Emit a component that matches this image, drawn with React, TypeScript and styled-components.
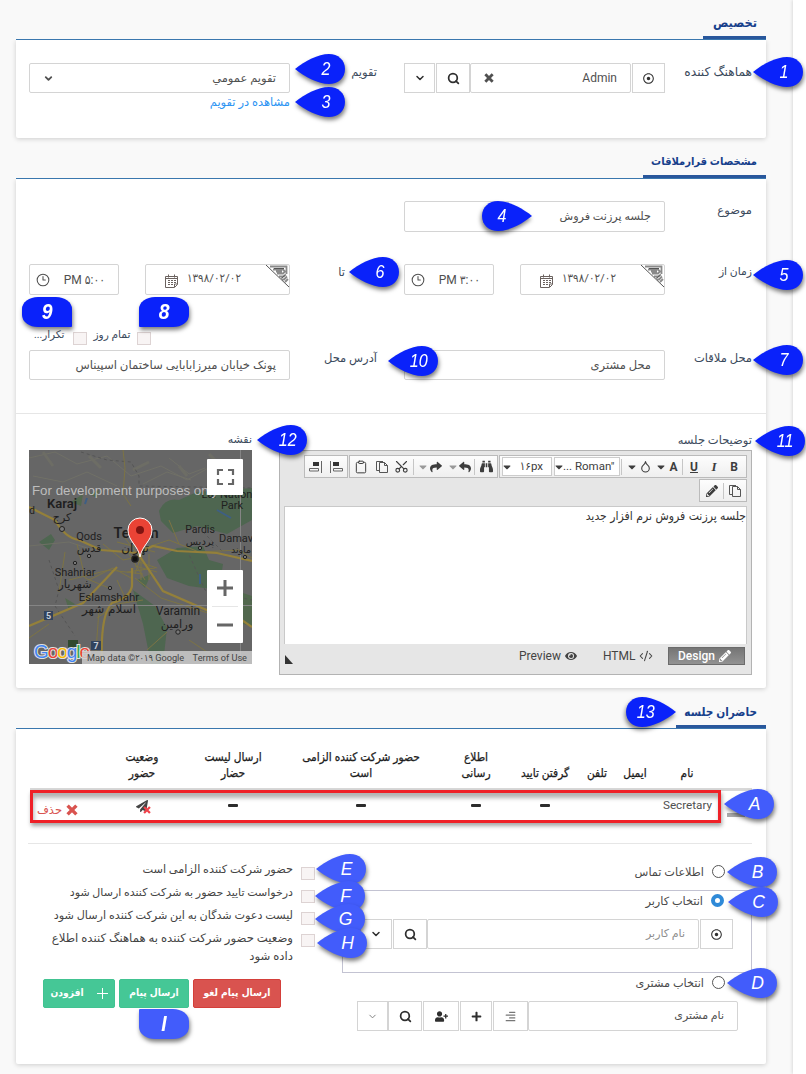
import React from "react";
import styled, { createGlobalStyle, css } from "styled-components";
import {
  FaRegDotCircle, FaPlus, FaUserPlus, FaAlignRight, FaPaperPlane,
  FaShare, FaReply, FaBinoculars, FaEye, FaPencilAlt, FaCaretDown,
} from "react-icons/fa";
import { ChevronDown, Clipboard, Copy, Scissors, Clock3, Droplet, Search, CodeXml } from "lucide-react";

const Global = createGlobalStyle`
  * { box-sizing: border-box; }
  body { margin: 0; background: #f9f9f9; overflow: hidden; }
  svg { flex: none; display: block; }
`;

const wide = `Roboto, "DejaVu Sans", sans-serif`;
const narrow = `Roboto, "DejaVu Sans Condensed", "DejaVu Sans", sans-serif`;

const Page = styled.div`
  position: relative;
  width: 806px;
  height: 1074px;
  display: flex;
  overflow: hidden;
  background: #f9f9f9;
  color: #444;
  font: 12px/20px ${wide};
`;

const Main = styled.main`
  width: 766px;
  padding-left: 16px;
  margin-right: 27px;
`;

const SideStrip = styled.aside`
  flex: 1;
  background: #fff;
  box-shadow: -1px 0 3px rgba(0, 0, 0, 0.12);
`;

const SectionHead = styled.header<{ $h: number }>`
  height: ${(p) => p.$h}px;
  display: flex;
  justify-content: flex-end;
  align-items: flex-end;
  border-bottom: 1px solid #3a77ae;
`;

const SectionTab = styled.h2<{ $w: number; $size?: number }>`
  width: ${(p) => p.$w}px;
  height: 26px;
  margin: 0;
  padding-right: 9px;
  border-bottom: 3px solid #29579c;
  color: #17408b;
  font: 700 ${(p) => p.$size ?? 12}px/20px ${narrow};
  text-align: right;
  white-space: nowrap;
  direction: rtl;
`;

const Card = styled.section<{ $h: number; $top: number }>`
  height: ${(p) => p.$h}px;
  padding: ${(p) => p.$top}px 0 0 13px;
  background: #fff;
  border-radius: 0 0 2px 2px;
  box-shadow: 0 1px 5px rgba(0, 0, 0, 0.18);
  clip-path: inset(0 -8px -8px -8px);
`;

const FormRow = styled.div<{ $mt?: number }>`
  display: grid;
  grid-template-columns: 261px 87px 27px 261px 87px;
  align-items: start;
  margin-top: ${(p) => p.$mt ?? 0}px;
`;

const Cell = styled.div<{ $col: number }>`
  grid-column: ${(p) => p.$col};
  grid-row: 1;
  display: flex;
  justify-content: space-between;
`;

const Label = styled.div<{ $col?: number; $mt?: number; $size?: number; $pr?: number }>`
  ${(p) => p.$col && css`grid-column: ${p.$col}; grid-row: 1;`}
  margin-top: ${(p) => p.$mt ?? 0}px;
  padding-right: ${(p) => p.$pr ?? 0}px;
  direction: rtl;
  color: #3b4a5c;
  font-size: ${(p) => p.$size ?? 11.5}px;
  line-height: 20px;
  white-space: nowrap;
`;

const fieldFrame = css`
  border: 1px solid #d4d4d4;
  border-radius: 2px;
  background: #fff;
`;

const Field = styled.div<{ $w: number; $h?: number; $size?: number; $muted?: boolean }>`
  ${fieldFrame}
  width: ${(p) => p.$w}px;
  height: ${(p) => p.$h ?? 31}px;
  padding: 0 13px;
  display: flex;
  flex-direction: row-reverse;
  justify-content: space-between;
  align-items: center;
  color: ${(p) => (p.$muted ? "#8d8d8d" : "#505050")};
  font-size: ${(p) => p.$size ?? 11.5}px;
  white-space: nowrap;
`;

const Rtl = styled.span<{ $size?: number }>`
  direction: rtl;
  ${(p) => p.$size && css`font-size: ${p.$size}px;`}
`;

const AddOn = styled.div<{ $w: number; $ml?: number; $light?: boolean }>`
  ${fieldFrame}
  border-radius: 0;
  width: ${(p) => p.$w}px;
  height: 30px;
  margin-left: ${(p) => p.$ml ?? 0}px;
  display: flex;
  align-items: center;
  justify-content: center;
  color: ${(p) => (p.$light ? "#777" : "#2e2e2e")};
`;

const Group = styled.div<{ $mt?: number; $ml?: number }>`
  display: flex;
  align-items: flex-start;
  margin: ${(p) => p.$mt ?? 0}px 0 0 ${(p) => p.$ml ?? 0}px;
`;

const Link = styled.a`
  display: block;
  width: 261px;
  margin-top: -1px;
  direction: rtl;
  color: #2d94f3;
  font-size: 11.5px;
  line-height: 20px;
`;

const DateBox = styled.div`
  ${fieldFrame}
  width: 145px;
  height: 31px;
  padding: 0 0 0 19px;
  display: flex;
  overflow: hidden;
  color: #505050;
`;

const DateText = styled.span`
  width: 56px;
  margin: 3px 0 0 9px;
  font-size: 11.5px;
  font-family: ${narrow};
  white-space: nowrap;
`;

const Corner = styled.svg`
  margin-left: auto;
`;

const CalIcon = styled.svg`
  margin-top: 9px;
`;

const TimeBox = styled.div`
  ${fieldFrame}
  width: 90px;
  height: 31px;
  padding: 0 13px 0 6px;
  display: flex;
  align-items: center;
  justify-content: space-between;
  color: #505050;
  font-size: 12px;
  font-family: ${narrow};
`;

const CheckRow = styled.div`
  display: flex;
  align-items: flex-start;
  height: 22px;
  margin-top: 30px;
  padding-left: 5px;
`;

const Check = styled.i<{ $m?: string }>`
  flex: none;
  width: 14px;
  height: 13px;
  margin: ${(p) => p.$m ?? "0"};
  border: 1px solid #ddd3d3;
  background: #f8f4f4;
`;

const Rule = styled.hr<{ $m: string }>`
  height: 1px;
  margin: ${(p) => p.$m};
  border: 0;
  background: #e6e6e6;
`;

const LowerRow = styled.div`
  display: flex;
  justify-content: space-between;
  width: 723px;
  margin-top: 16px;
`;

const MapFrame = styled.div`
  position: relative;
  width: 223px;
  height: 214px;
  overflow: hidden;
  background: #666;
`;

const MapButton = styled.div<{ $y: number; $h: number }>`
  position: absolute;
  left: 178px;
  top: ${(p) => p.$y}px;
  width: 36px;
  height: ${(p) => p.$h}px;
  border-radius: 1px;
  background: #fff;
`;

const MapCredit = styled.div`
  position: absolute;
  right: 0;
  bottom: 0;
  width: 170px;
  height: 13px;
  padding: 0 5px;
  display: flex;
  justify-content: space-between;
  background: rgba(205, 205, 205, 0.85);
  color: #444;
  font: 9.2px/13px ${narrow};
  white-space: nowrap;
`;

const Editor = styled.div`
  width: 473px;
  height: 225px;
  padding: 4px;
  border: 1px solid #b3b3b3;
  background: #e6e6e6;
`;

const ToolLine = styled.div`
  display: flex;
  justify-content: flex-end;
  gap: 1px;
  margin-bottom: 1px;
`;

const ToolGroup = styled.div<{ $w: number }>`
  width: ${(p) => p.$w}px;
  height: 23px;
  display: flex;
  align-items: center;
  border: 1px solid #bbb;
  background: linear-gradient(#fdfdfd, #efefef);
  color: #3d3d3d;
`;

const Slot = styled.span<{ $w: number; $ml?: number }>`
  width: ${(p) => p.$w}px;
  margin-left: ${(p) => p.$ml ?? 0}px;
  display: flex;
  justify-content: center;
`;

const Sep = styled.i<{ $ml?: number }>`
  width: 1px;
  height: 16px;
  margin-left: ${(p) => p.$ml ?? 0}px;
  background: #c6c6c6;
`;

const MiniSelect = styled.div<{ $w: number }>`
  width: ${(p) => p.$w}px;
  height: 19px;
  margin-left: 2px;
  display: flex;
  align-items: center;
  justify-content: space-between;
  padding: 0 8px 2px 0;
  border: 1px solid #ccc;
  background: #fff;
  font: 11.5px/16px ${narrow};
  white-space: nowrap;
  svg { width: 8px; margin-top: 2px; }
`;

const Glyph = styled.b<{ $look?: "italic" | "underline" }>`
  font-size: 12px;
  ${(p) => p.$look === "italic" && css`font: italic 700 13px/20px "Liberation Serif", serif;`}
  ${(p) => p.$look === "underline" && css`text-decoration: underline;`}
`;

const EditArea = styled.div`
  height: 138px;
  margin-top: 4px;
  border: 1px solid #c9c9c9;
  border-bottom: 0;
  background: #fff;
  direction: rtl;
  font: 12.1px/19px "DejaVu Sans Condensed", sans-serif;
  color: #333;
`;

const EditorFoot = styled.div`
  display: flex;
  align-items: center;
  height: 24px;
  font-size: 12px;
  padding-right: 2px;
`;

const Mode = styled.span<{ $ml: number }>`
  display: flex;
  align-items: center;
  gap: 4px;
  margin-left: ${(p) => p.$ml}px;
  color: #444;
`;

const ModeActive = styled.span`
  display: flex;
  align-items: center;
  gap: 4px;
  width: 77px;
  height: 18px;
  margin-left: auto;
  padding-left: 9px;
  border: 1px solid #6b6b6b;
  background: linear-gradient(#757575, #929292);
  color: #fff;
  font-weight: 500;
`;

const TableHead = styled.div`
  display: grid;
  grid-template-columns: 70px 84px 98px 158px 72px 66px 38px 38px 66px;
  width: 722px;
  height: 59px;
  align-items: end;
  padding-bottom: 7px;
  margin-left: 1px;
  border-bottom: 3px solid #d8d8d8;
  text-align: center;
  color: #1c1c1c;
  font: 500 11.8px/16px ${narrow};
  -webkit-text-stroke: 0.25px #1c1c1c;
`;

const HeadCell = styled.div`
  direction: rtl;
  white-space: nowrap;
`;

const TableRow = styled.div`
  display: grid;
  grid-template-columns: 67px 84px 98px 158px 72px 66px 38px 38px 61px;
  width: 691px;
  height: 33px;
  margin: -1px 0 0 1px;
  border: 3px solid #ef2027;
  box-shadow: 1px 3px 4px rgba(0, 0, 0, 0.35), inset 1px 5px 4px rgba(0, 0, 0, 0.3);
  justify-items: center;
  padding-top: 3px;
  position: relative;
`;

const Dash = styled.i`
  width: 10px;
  height: 3px;
  margin-top: 8px;
  border-radius: 1px;
  background: #2c2c2c;
`;

const Remove = styled.span`
  display: flex;
  align-items: center;
  gap: 4px;
  margin-top: 4px;
  margin-right: 18px;
  color: #d9534f;
  font-size: 11.5px;
`;

const PersonName = styled.span`
  margin: -1px -6px 0 0;
  color: #505050;
  font-size: 11.7px;
`;

const SendState = styled.span`
  position: relative;
  margin-top: 4px;
  height: 16px;
  svg + svg { position: absolute; left: 7px; top: 6px; color: #f0424a; }
`;

const Invite = styled.div`
  display: flex;
  justify-content: space-between;
  width: 723px;
`;

const Options = styled.div`
  width: 286px;
  padding-top: 17px;
`;

const OptionRow = styled.div<{ $h: number }>`
  display: flex;
  flex-direction: row-reverse;
  align-items: flex-start;
  gap: 8px;
  height: ${(p) => p.$h}px;
  color: #444;
  font-size: 11.3px;
  line-height: 18px;
  white-space: nowrap;
`;

const Actions = styled.div`
  display: flex;
  gap: 4px;
  margin: -1px 0 0 14px;
`;

const Button = styled.button<{ $w: number; $danger?: boolean }>`
  width: ${(p) => p.$w}px;
  height: 29px;
  padding: 0 0 1px;
  display: flex;
  align-items: center;
  justify-content: center;
  gap: 13px;
  border: 1px solid ${(p) => (p.$danger ? "#d43f3a" : "#41c391")};
  border-radius: 2px;
  background: ${(p) => (p.$danger ? "#d9534f" : "#45c796")};
  color: #fff;
  font: 700 10.2px/18px "DejaVu Sans Condensed", sans-serif;
`;

const Pick = styled.div`
  width: 410px;
`;

const RadioLine = styled.div<{ $pt: number; $pr: number; $h: number }>`
  display: flex;
  justify-content: flex-end;
  gap: 8px;
  height: ${(p) => p.$h}px;
  padding: ${(p) => p.$pt}px ${(p) => p.$pr}px 0 0;
  color: #4a4a4a;
  font-size: 11.3px;
  line-height: 18px;
`;

const Radio = styled.i<{ $on?: boolean }>`
  width: 13px;
  height: 13px;
  margin-top: 1px;
  border-radius: 50%;
  background: #fff;
  border: ${(p) => (p.$on ? "4px solid #2f8ad8" : "1px solid #555")};
`;

const UserBox = styled.div`
  height: 83px;
  border: 1px solid #c3c3d2;
`;

const ScrollNub = styled.i`
  position: absolute;
  left: 694px;
  top: 20px;
  width: 18px;
  height: 4px;
  background: #aaa;
`;

const Callouts = styled.div`
  position: absolute;
  inset: 0;
  pointer-events: none;
`;

const Drop = styled.div<{ $x: number; $y: number; $flip?: boolean; $soft?: boolean }>`
  position: absolute;
  left: ${(p) => p.$x}px;
  top: ${(p) => p.$y - 15}px;
  width: 50px;
  height: 30px;
  padding-${(p) => (p.$flip ? "right" : "left")}: 11px;
  color: #fff;
  font: italic 17.5px/30px "Liberation Sans", sans-serif;
  text-align: center;
  > svg {
    position: absolute;
    inset: 0;
    overflow: visible;
    color: ${(p) => (p.$soft ? "#425cfb" : "#0a22fa")};
    transform: ${(p) => (p.$flip ? "scaleX(-1)" : "none")};
    filter: drop-shadow(1px 3px 2px rgba(0, 0, 0, 0.5));
  }
  > span {
    position: relative;
    display: inline-block;
    transform: scaleX(${(p) => (p.$soft ? 1 : 0.92)});
  }
`;

const Tag = styled.div<{ $x: number; $y: number; $radius: string; $soft?: boolean }>`
  position: absolute;
  left: ${(p) => p.$x}px;
  top: ${(p) => p.$y}px;
  width: 50px;
  height: 30px;
  border-radius: ${(p) => p.$radius};
  background: ${(p) => (p.$soft ? "#425cfb" : "#0a22fa")};
  box-shadow: 1px 3px 4px rgba(0, 0, 0, 0.5);
  color: #fff;
  font: italic 700 22px/30px "Liberation Sans", sans-serif;
  text-align: center;
  > span { display: inline-block; transform: scaleX(0.88); }
`;

type Mark = { t: string; x: number; y: number; flip?: boolean; soft?: boolean };
const marks: Mark[] = [
  { t: "1", x: 753, y: 72 }, { t: "2", x: 295, y: 69 }, { t: "3", x: 295, y: 102 },
  { t: "4", x: 482, y: 216, flip: true }, { t: "5", x: 753, y: 275 }, { t: "6", x: 349, y: 272 },
  { t: "7", x: 753, y: 360 }, { t: "10", x: 388, y: 361 }, { t: "11", x: 755, y: 441 },
  { t: "12", x: 257, y: 440 }, { t: "13", x: 626, y: 712, flip: true },
  { t: "A", x: 724, y: 804, soft: true }, { t: "B", x: 727, y: 872, soft: true },
  { t: "C", x: 728, y: 902, soft: true }, { t: "D", x: 727, y: 983, soft: true },
  { t: "E", x: 316, y: 869, soft: true }, { t: "F", x: 315, y: 896, soft: true },
  { t: "G", x: 315, y: 919, soft: true }, { t: "H", x: 317, y: 943, soft: true },
];

const Cross = ({ size }: { size: number }) => (
  <svg width={size} height={size} viewBox="0 0 12 12" stroke="currentColor" strokeWidth="3.4">
    <path d="M1.600 1.600L10.400 10.400M10.400 1.600L1.600 10.400" />
  </svg>
);
const Down = ({ size = 12, weight = 3 }: { size?: number; weight?: number }) => (
  <ChevronDown size={size} strokeWidth={weight} />
);
const Find = () => <Search size={13} strokeWidth={3.2} />;

const DateField = () => (
  <DateBox>
    <CalIcon width="13" height="14" viewBox="0 0 13 14" fill="none" stroke="#6b625f">
      <path d="M.5 2.5h12v8l-3 3h-9zM.5 4.5h12M3.5.5v3M9.5.5v3M9.5 13v-3h3" />
      <path d="M3 6.5h2M6 6.5h2M9 6.5h2M3 8.5h2M6 8.5h2M9 8.5h2M3 10.5h2M6 10.5h2" />
    </CalIcon>
    <DateText>۱۳۹۸/۰۲/۰۲</DateText>
    <Corner width="23" height="23" viewBox="0 0 23 23" fill="none" stroke="#8a8a8a">
      <path d="M4 1.500H20.500V9M7 4.500h10l2 2-2 2h-6M10 6.500h6M13 11.500h4l3-2M16 14.500h2l3-3M19 17l3-3" strokeWidth="1.800" />
      <path d="M0 0L23 22M8 3.500h10M15 13.500l4-3" stroke="#555" />
    </Corner>
  </DateBox>
);

const TimeField = ({ text }: { text: string }) => (
  <TimeBox><Clock3 size={14} strokeWidth={1.8} /><span>{text}</span></TimeBox>
);

const RoadMap = () => (
  <svg width="223" height="214" viewBox="0 0 223 214" fill="none">
    <path d="M130 61q6-14 20-11l18-8 55-4v32l-25 14-30-8-24 7-12-12zM128 110l20-12 26-2 6 14 14 4-4 26-30-4-22-8zM104 140l22 16 12 22-4 36h-12l-8-40zM10 92l12-8 4 6-6 10z" fill="#4e6650" />
    <path d="M42 52l12-8-2 12zM36 148l10 6-6 6zM108 130l14-6-6 14zM60 44l10-4-2 8zM205 140l18 6v30l-18-4z" fill="#52684e" />
    <path d="M0 8l26-6 22 12 30-8 24 20 30-10 26 14 32-18M4 26l30 6 24-10 30 14M114 34l24-12 24 8M0 96l40-4 30 10M140 8l20 16 16-6" stroke="#707066" />
    <path d="M14 2l10 14M60 6l12 12M104 20l16-8M180 4l10 10M150 16l8 10" stroke="#6d6d65" strokeWidth="3" />
    <path d="M52 2l26 8 24 2 8 14v10l113 2M20 110l10 30-4 16 20 30M158 100l18 40 47 10M174 82l20 20" stroke="#555" strokeDasharray="3 3" />
    <g stroke="#7d7444">
      <path d="M94 0l2 18-2 26 8 12M110 100l30-10 30 12 40-2 13 8M48 94l8 34 24 10M60 130l24-12 18 10M74 94l20 16 20-4M88 130l10 22M106 128l26 20 50 16M68 168l20-14 26-4M140 70l10 24M96 88l30 40M88 92l38 10M100 104l16 26M118 88l-12 36M40 130l40-10 34 4M0 188l20-14M36 102l-6 40M160 190l30 20M70 160l-4 54M118 200l20-18" />
      <path d="M104 110l24 8M106 116l22 6M112 104v26M120 104v26M98 122l28-4" />
    </g>
    <g stroke="#94803a" strokeWidth="2.2">
      <path d="M0 57l26 13q10 18 24 20l22 10 38 3 14-7 24 5 40 2 35 8M0 176l54-23 34-36M103 118v18q-2 12-20 17-12 12-10 61M110 105l24 36 46 20 14-4 29 20" />
    </g>
    <path d="M188 60l14 8M58 48l-2 6M171 124v10" stroke="#3e5f84" strokeWidth="2" />
    <path d="M211.500 0V214M0 155.500H223" stroke="#858585" />
    <g fontFamily="Roboto, sans-serif" fill="#1f1f1f" fontSize="11" textAnchor="middle">
      <text x="33" y="58" fontSize="13" fontWeight="600">Karaj</text>
      <text x="3" y="64" fontSize="10">d</text>
      <text x="60" y="90">Qods</text>
      <text x="107" y="88" fontSize="14.500" fontWeight="600">Tehran</text>
      <text x="171" y="83" fontSize="10.500">Pardis</text>
      <text x="207" y="92">Damav</text>
      <text x="198" y="48">Lar Nation</text>
      <text x="203" y="59">Park</text>
      <text x="46" y="126">Shahriar</text>
      <text x="80" y="151" fontSize="11.500">Eslamshahr</text>
      <text x="149" y="165" fontSize="12">Varamin</text>
    </g>
    <g fontFamily="DejaVu Sans, sans-serif" fill="#1f1f1f" fontSize="11" textAnchor="middle">
      <text x="33" y="71">کرج</text>
      <text x="60" y="102" fontSize="11">قدس</text>
      <text x="106" y="102" fontSize="12">تهران</text>
      <text x="171" y="95" fontSize="10">پردیس</text>
      <text x="212" y="103" fontSize="9.500">ماوند</text>
      <text x="46" y="138" fontSize="11.500">شهریار</text>
      <text x="80" y="163" fontSize="12">اسلام شهر</text>
      <text x="148" y="178" fontSize="11.500">ورامین</text>
    </g>
    <g stroke="#222" fill="#777">
      <circle cx="33" cy="79" r="2.500" /><circle cx="60" cy="106" r="1.700" /><circle cx="46" cy="113" r="1.700" />
      <circle cx="81" cy="138" r="1.700" /><circle cx="171" cy="98" r="1.700" /><circle cx="216" cy="107" r="1.700" />
      <circle cx="149" cy="182" r="2.200" /><circle cx="106" cy="109" r="3" fill="#111" strokeWidth="1.500" />
    </g>
    <text x="3" y="45" fill="#bdbdbd" fontFamily="Liberation Sans, sans-serif" fontSize="13.3">For development purposes only</text>
    <g fill="#fff" fontFamily="Roboto, sans-serif" fontSize="9" fontWeight="700">
      <path d="M15 161h9v9h-9zM62 191h10v9h-10z" fill="#31435d" /><path d="M39 190h10v10h-10z" fill="#30492f" />
      <text x="17" y="169" fill="#c8ced8">5</text><text x="64.500" y="199" fill="#c8ced8">7</text>
    </g>
    <path d="M111 107C109 95 99 91 99 80a12 12 0 0 1 24 0c0 11-10 15-12 27z" fill="#ea4335" stroke="#fff" />
    <circle cx="111" cy="80" r="4" fill="#811411" />
    <text x="5" y="208" fontFamily="Liberation Sans, sans-serif" fontSize="19" strokeWidth="2" stroke="#e0e0e0" paintOrder="stroke" textLength="56">
      <tspan fill="#4285f4">G</tspan><tspan fill="#ea4335">o</tspan><tspan fill="#fbbc05">o</tspan><tspan fill="#4285f4">g</tspan><tspan fill="#34a853">l</tspan><tspan fill="#ea4335">e</tspan>
    </text>
  </svg>
);

export default function App() {
  return (
    <>
      <Global />
      <Page>
        <Main>
          <SectionHead $h={40}><SectionTab $w={63} $size={12.7}>تخصیص</SectionTab></SectionHead>
          <Card $h={98} $top={23}>
            <FormRow>
              <Cell $col={1}>
                <Field $w={261} $h={30}><Rtl>تقويم عمومي</Rtl><Down size={11} weight={4} /></Field>
              </Cell>
              <Label $col={2} $mt={-1}>تقویم</Label>
              <Cell $col={4}>
                <Group>
                  <AddOn $w={31}><Down /></AddOn>
                  <AddOn $w={34} $ml={1}><Find /></AddOn>
                  <Field $w={161} $h={30} $size={12}><span>Admin</span><Cross size={10} /></Field>
                  <AddOn $w={33} $ml={1}><FaRegDotCircle size={11} /></AddOn>
                </Group>
              </Cell>
              <Label $col={5} $mt={-1} $size={12.3}>هماهنگ کننده</Label>
            </FormRow>
            <Link>مشاهده در تقویم</Link>
          </Card>

          <SectionHead $h={41}><SectionTab $w={123} $size={11.1}>مشخصات قرارملاقات</SectionTab></SectionHead>
          <Card $h={509} $top={22}>
            <FormRow>
              <Cell $col={4}><Field $w={261}><Rtl $size={11.2}>جلسه پرزنت فروش</Rtl></Field></Cell>
              <Label $col={5} $mt={-1}>موضوع</Label>
            </FormRow>
            <FormRow $mt={32}>
              <Cell $col={1}><TimeField text="PM ۵:۰۰" /><DateField /></Cell>
              <Label $col={2} $mt={-2} $pr={32}>تا</Label>
              <Cell $col={4}><TimeField text="PM ۳:۰۰" /><DateField /></Cell>
              <Label $col={5} $mt={-2} $size={10.8}>زمان از</Label>
            </FormRow>
            <CheckRow>
              <Label $size={10.4}>تکرار...</Label><Check $m="7px 7px 0 8px" />
              <Label $size={10.6}>تمام روز</Label><Check $m="7px 0 0 7px" />
            </CheckRow>
            <FormRow $mt={3}>
              <Cell $col={1}><Field $w={261} $h={30}><Rtl $size={11.7}>پونک خیابان میرزابابایی ساختمان اسپیناس</Rtl></Field></Cell>
              <Label $col={2} $mt={-2}>آدرس محل</Label>
              <Cell $col={4}><Field $w={261} $h={30}><Rtl>محل مشتری</Rtl></Field></Cell>
              <Label $col={5} $mt={-2}>محل ملاقات</Label>
            </FormRow>
            <Rule $m="33px 0 0 -13px" />
            <LowerRow>
              <div>
                <Label $size={11}>نقشه</Label>
                <MapFrame>
                  <RoadMap />
                  <MapButton $y={9} $h={36}>
                    <svg width="36" height="36" viewBox="0 0 36 36" fill="none" stroke="#666" strokeWidth="2.2">
                      <path d="M11 16v-5h5M21 11h5v5M26 20v5h-5M16 25h-5v-5" />
                    </svg>
                  </MapButton>
                  <MapButton $y={120} $h={73}>
                    <svg width="36" height="73" viewBox="0 0 36 73" fill="none" stroke="#666" strokeWidth="3">
                      <path d="M10 18h16M18 10v16M10 55h16" /><path d="M5 36.500h26" stroke="#e6e6e6" strokeWidth="1" />
                    </svg>
                  </MapButton>
                  <MapCredit><span>Map data ©۲۰۱۹ Google</span><span>Terms of Use</span></MapCredit>
                </MapFrame>
              </div>
              <div>
                <Label>توضیحات جلسه</Label>
                <Editor>
                  <ToolLine>
                    <ToolGroup $w={44}>
                      <Slot $w={22}><svg width="14" height="14" viewBox="0 0 14 14"><path d="M4 2h6v4H4z" fill="#333" /><path d="M.5 8.500h9v2.500h-9zM12.500 1v12" fill="none" stroke="#666" /></svg></Slot>
                      <Slot $w={18}><svg width="14" height="14" viewBox="0 0 14 14"><path d="M4 2h6v4H4z" fill="#333" /><path d="M4.500 8.500h9v2.500h-9zM1.500 1v12" fill="none" stroke="#666" /></svg></Slot>
                    </ToolGroup>
                    <ToolGroup $w={149}>
                      <Slot $w={22}><Clipboard size={14} strokeWidth={1.7} /></Slot>
                      <Slot $w={19}>
                        <svg width="14" height="14" viewBox="0 0 14 14" fill="none" stroke="#555"><path d="M4.500 2.500h5l3 3v7h-8zM9.500 2.500v3h3M4 10.500H1.500v-9H8" /></svg>
                      </Slot>
                      <Slot $w={21}><Scissors size={15} strokeWidth={1.8} transform="rotate(-90)" /></Slot>
                      <Sep $ml={1} />
                      <Slot $w={10} $ml={4}><FaCaretDown size={12} color="#999" /></Slot>
                      <Slot $w={14} $ml={1}><FaShare size={12} /></Slot>
                      <Slot $w={10} $ml={5}><FaCaretDown size={12} color="#999" /></Slot>
                      <Slot $w={14}><FaReply size={12} /></Slot>
                      <Sep $ml={2} />
                      <Slot $w={22}><FaBinoculars size={13} /></Slot>
                    </ToolGroup>
                    <ToolGroup $w={248}>
                      <MiniSelect $w={50}><FaCaretDown size={12} /><span>۱۶px</span></MiniSelect>
                      <MiniSelect $w={66}><FaCaretDown size={12} /><span>... Roman"</span></MiniSelect>
                      <Sep $ml={1} />
                      <Slot $w={12} $ml={4}><FaCaretDown size={12} /></Slot>
                      <Slot $w={14}><Droplet size={13} strokeWidth={2} /></Slot>
                      <Slot $w={10} $ml={4}><FaCaretDown size={12} /></Slot>
                      <Slot $w={13} $ml={1}><Glyph>A</Glyph></Slot>
                      <Sep $ml={2} />
                      <Slot $w={20} $ml={1}><Glyph $look="underline">U</Glyph></Slot>
                      <Slot $w={20}><Glyph $look="italic">I</Glyph></Slot>
                      <Slot $w={20}><Glyph>B</Glyph></Slot>
                    </ToolGroup>
                  </ToolLine>
                  <ToolLine>
                    <ToolGroup $w={48}>
                      <Slot $w={23}><FaPencilAlt size={12} /></Slot><Sep />
                      <Slot $w={22}>
                        <svg width="14" height="14" viewBox="0 0 14 14" fill="none" stroke="#555"><path d="M4.500 2.500h5l3 3v7h-8zM9.500 2.500v3h3M4 10.500H1.500v-9H8" /></svg>
                      </Slot>
                    </ToolGroup>
                  </ToolLine>
                  <EditArea>جلسه پرزنت فروش نرم افزار جدید</EditArea>
                  <EditorFoot>
                    <svg width="10" height="18" viewBox="0 0 10 18"><path d="M1 8v9h8z" fill="#333" /></svg>
                    <Mode $ml={225}>Preview <FaEye size={12} /></Mode>
                    <Mode $ml={26}>HTML <CodeXml size={14} strokeWidth={1.8} /></Mode>
                    <ModeActive>Design <FaPencilAlt size={12} /></ModeActive>
                  </EditorFoot>
                </Editor>
              </div>
            </LowerRow>
          </Card>

          <SectionHead $h={41}><SectionTab $w={90} $size={11.7}>حاضران جلسه</SectionTab></SectionHead>
          <Card $h={335} $top={3}>
            <TableHead>
              <HeadCell />
              <HeadCell>وضعیت<br />حضور</HeadCell>
              <HeadCell>ارسال لیست<br />حضار</HeadCell>
              <HeadCell>حضور شرکت کننده الزامی<br />است</HeadCell>
              <HeadCell>اطلاع<br />رسانی</HeadCell>
              <HeadCell>گرفتن تایید</HeadCell>
              <HeadCell>تلفن</HeadCell>
              <HeadCell>ایمیل</HeadCell>
              <HeadCell>نام</HeadCell>
            </TableHead>
            <TableRow>
              <Remove><span>حذف</span><Cross size={12} /></Remove>
              <SendState><FaPaperPlane size={12} /><Cross size={8} /></SendState>
              <Dash /><Dash /><Dash /><Dash /><span /><span />
              <PersonName>Secretary</PersonName>
              <ScrollNub />
            </TableRow>
            <Rule $m="20px 14px 0 -1px" />
            <Invite>
              <Options>
                <OptionRow $h={23}><Check $m="6px 0 0" /><Rtl>حضور شرکت کننده الزامی است</Rtl></OptionRow>
                <OptionRow $h={23}><Check $m="6px 0 0" /><Rtl $size={11}>درخواست تایید حضور به شرکت کننده ارسال شود</Rtl></OptionRow>
                <OptionRow $h={22}><Check $m="5px 0 0" /><Rtl $size={11.2}>لیست دعوت شدگان به این شرکت کننده ارسال شود</Rtl></OptionRow>
                <OptionRow $h={51}>
                  <Check $m="5px 0 0" />
                  <Rtl $size={11.7}>وضعیت حضور شرکت کننده به هماهنگ کننده اطلاع<br />داده شود</Rtl>
                </OptionRow>
                <Actions>
                  <Button $w={72}>افزودن<svg width="11" height="11" viewBox="0 0 11 11" stroke="#fff"><path d="M5.500 0v11M0 5.500h11" /></svg></Button>
                  <Button $w={70}>ارسال پیام</Button>
                  <Button $w={88} $danger>ارسال پیام لغو</Button>
                </Actions>
              </Options>
              <Pick>
                <RadioLine $pt={20} $pr={27} $h={46}><Rtl>اطلاعات تماس</Rtl><Radio /></RadioLine>
                <UserBox>
                  <RadioLine $pt={2} $pr={27} $h={28}><Rtl>انتخاب کاربر</Rtl><Radio $on /></RadioLine>
                  <Group $ml={17}>
                    <AddOn $w={32}><Down /></AddOn>
                    <AddOn $w={34} $ml={1}><Find /></AddOn>
                    <Field $w={272} $h={30} $muted><Rtl $size={11}>نام کاربر</Rtl></Field>
                    <AddOn $w={33} $ml={1}><FaRegDotCircle size={11} /></AddOn>
                  </Group>
                </UserBox>
                <RadioLine $pt={2} $pr={27} $h={28}><Rtl>انتخاب مشتری</Rtl><Radio /></RadioLine>
                <Group $ml={15}>
                  <AddOn $w={31} $light><Down size={11} weight={2} /></AddOn>
                  <AddOn $w={34}><Find /></AddOn>
                  <AddOn $w={36} $ml={1}><FaUserPlus size={13} /></AddOn>
                  <AddOn $w={32} $ml={1}><FaPlus size={11} /></AddOn>
                  <AddOn $w={35} $ml={1} $light><FaAlignRight size={11} /></AddOn>
                  <Field $w={210} $h={30}><Rtl $size={11}>نام مشتری</Rtl></Field>
                </Group>
              </Pick>
            </Invite>
          </Card>
        </Main>
        <SideStrip />
        <Callouts>
          {marks.map((m) => (
            <Drop key={m.t} $x={m.x} $y={m.y} $flip={m.flip} $soft={m.soft}>
              <svg width="50" height="30" viewBox="0 0 50 30" fill="currentColor">
                <path d="M0 15C10 7 23 0 34 0C43 0 50 6 50 15S43 30 34 30C23 30 10 23 0 15Z" />
              </svg>
              <span>{m.t}</span>
            </Drop>
          ))}
          <Tag $x={139} $y={297} $radius="16px 16px 16px 1px / 12px 12px 12px 1px"><span>8</span></Tag>
          <Tag $x={22} $y={297} $radius="16px 16px 1px 16px / 12px 12px 1px 12px"><span>9</span></Tag>
          <Tag $x={139} $y={1009} $radius="1px 16px 16px 16px / 1px 12px 12px 12px" $soft><span>I</span></Tag>
        </Callouts>
      </Page>
    </>
  );
}
